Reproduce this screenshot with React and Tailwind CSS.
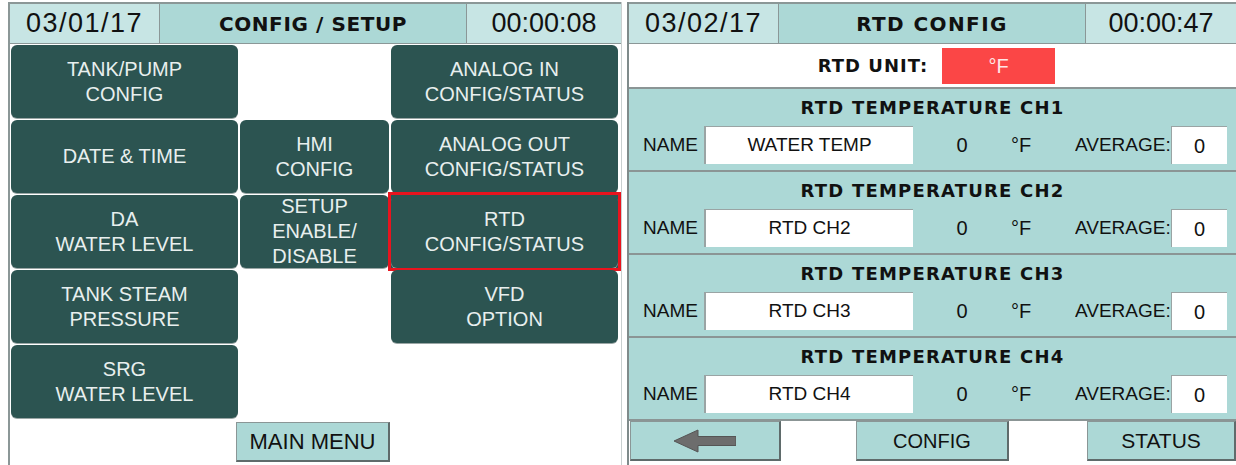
const Btn = ({ children, className = "" }) => (
  <div
    className={`flex items-center justify-center text-center bg-[#2c5451] text-[#e8efee] text-[20px] leading-[25px] rounded-[6px] shadow-[0_1px_0_#9aa6a5] ${className}`}
  >
    {children}
  </div>
);

const Header = ({ date, title, time, titleClass = "" }) => (
  <div className="flex h-[42px] border-t-2 border-b border-[#8b9797] text-[#111]">
    <div className="w-[150px] flex items-center justify-center bg-[#c7e5e4] border-r border-[#8b9797] text-[27px] tracking-[1.5px]">
      {date}
    </div>
    <div
      className={`w-[307px] flex items-center justify-center bg-[#acd8d6] border-r border-[#8b9797] font-['DejaVu_Sans',sans-serif] text-[20px] font-bold ${titleClass}`}
    >
      {title}
    </div>
    <div className="flex-1 flex items-center justify-center bg-[#c7e5e4] text-[27px]">
      {time}
    </div>
  </div>
);

const Channel = ({ n, name }) => (
  <div className="h-[83px] border-t-2 border-[#8b9595] bg-[#acd8d6] text-[#111]">
    <div className="h-[37px] flex items-center justify-center font-['DejaVu_Sans',sans-serif] text-[18px] font-bold tracking-[1.2px]">
      RTD TEMPERATURE CH{n}
    </div>
    <div className="h-[38px] flex items-center pl-[14px] text-[19px]">
      <span className="w-[61px]">NAME</span>
      <div className="w-[209px] h-[38px] bg-white border-l-2 border-t border-[#9aa4a4] flex items-center justify-center">
        {name}
      </div>
      <span className="w-[98px] text-center text-[20px]">0</span>
      <span className="w-[30px] text-[20px]">°F</span>
      <span className="ml-[34px] w-[96px] whitespace-nowrap overflow-hidden">AVERAGE:</span>
      <div className="w-[56px] h-[38px] bg-white border-l border-t border-[#9aa4a4] flex items-center justify-center text-[20px]">
        0
      </div>
    </div>
  </div>
);

const BottomBtn = ({ children, className = "" }) => (
  <div
    className={`h-[40px] flex items-center justify-center bg-[#acd8d6] border border-[#8a9696] border-r-2 border-b-2 border-r-[#5f6b6b] border-b-[#5f6b6b] ${className}`}
  >
    {children}
  </div>
);

export default function App() {
  return (
    <div className="w-[1236px] h-[465px] bg-white flex pt-[2px] font-['Liberation_Sans',Arial,sans-serif] overflow-hidden">
      {/* left screen */}
      <div className="ml-[8px] w-[614px] border-l-2 border-r border-l-[#8b9797] border-r-[#c9d0d0]">
        <Header date="03/01/17" title="CONFIG / SETUP" time="00:00:08" titleClass="tracking-[0.6px]" />
        <div className="mt-[1px] pl-[1px] grid grid-cols-[227px_149px_227px] auto-rows-[73px] gap-x-[2px] gap-y-[2px]">
          <Btn>TANK/PUMP<br />CONFIG</Btn>
          <div />
          <Btn>ANALOG IN<br />CONFIG/STATUS</Btn>

          <Btn>DATE &amp; TIME</Btn>
          <Btn>HMI<br />CONFIG</Btn>
          <Btn>ANALOG OUT<br />CONFIG/STATUS</Btn>

          <Btn>DA<br />WATER LEVEL</Btn>
          <Btn className="text-[17px] leading-[21px]">SETUP<br />ENABLE/<br />DISABLE</Btn>
          <div className="outline-[3px] outline-[#e8141e] bg-[#2c5451]">
            <Btn className="h-full">RTD<br />CONFIG/STATUS</Btn>
          </div>

          <Btn>TANK STEAM<br />PRESSURE</Btn>
          <div />
          <Btn>VFD<br />OPTION</Btn>

          <Btn>SRG<br />WATER LEVEL</Btn>
          <div />
          <div />
        </div>
        <div className="mt-[4px] pl-[226px]">
          <div className="w-[154px] h-[40px] flex items-center justify-center bg-[#acd8d6] border border-[#8a9696] border-r-2 border-b-2 border-r-[#5f6b6b] border-b-[#5f6b6b] text-[22px] text-[#111]">
            MAIN MENU
          </div>
        </div>
      </div>

      {/* right screen */}
      <div className="ml-[5px] w-[609px] border-l-2 border-[#7f8b8b]">
        <Header date="03/02/17" title="RTD CONFIG" time="00:00:47" titleClass="tracking-[1.4px]" />
        <div className="h-[43px] flex items-center justify-center pl-[8px]">
          <span className="font-['DejaVu_Sans',sans-serif] text-[18px] font-bold tracking-[1px] text-[#111]">RTD UNIT:</span>
          <div className="ml-[14px] w-[113px] h-[36px] bg-[#fb4646] flex items-center justify-center text-[20px] text-[#ffe6e6]">
            °F
          </div>
        </div>
        <Channel n={1} name="WATER TEMP" />
        <Channel n={2} name="RTD CH2" />
        <Channel n={3} name="RTD CH3" />
        <Channel n={4} name="RTD CH4" />
        <div className="border-t-2 border-[#8b9595] flex text-[#111]">
          <BottomBtn className="ml-[1px] w-[151px]">
            <svg width="62" height="24" viewBox="0 0 62 24">
              <polygon points="0,12 24,1 24,7.5 62,7.5 62,16.5 24,16.5 24,23" fill="#6d6d6d" stroke="#555" strokeWidth="1" />
            </svg>
          </BottomBtn>
          <BottomBtn className="ml-[75px] w-[153px] text-[20px]">CONFIG</BottomBtn>
          <BottomBtn className="ml-[78px] flex-1 text-[21px]">STATUS</BottomBtn>
        </div>
      </div>
    </div>
  );
}
